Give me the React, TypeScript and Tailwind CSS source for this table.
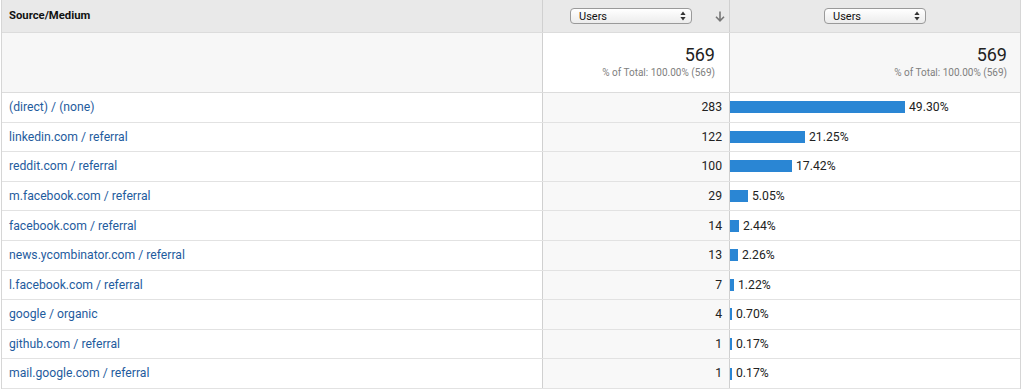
import React from 'react'

const rows = [
  { label: '(direct) / (none)', users: 283, pct: 49.3 },
  { label: 'linkedin.com / referral', users: 122, pct: 21.25 },
  { label: 'reddit.com / referral', users: 100, pct: 17.42 },
  { label: 'm.facebook.com / referral', users: 29, pct: 5.05 },
  { label: 'facebook.com / referral', users: 14, pct: 2.44 },
  { label: 'news.ycombinator.com / referral', users: 13, pct: 2.26 },
  { label: 'l.facebook.com / referral', users: 7, pct: 1.22 },
  { label: 'google / organic', users: 4, pct: 0.7 },
  { label: 'github.com / referral', users: 1, pct: 0.17 },
  { label: 'mail.google.com / referral', users: 1, pct: 0.17 },
]

function MetricSelect({ width }: { width: string }) {
  return (
    <div
      className={`flex h-[16px] ${width} items-center justify-between rounded-[4px] border border-[#9a9a9a] bg-gradient-to-b from-white to-[#ececec] pl-[8px] pr-[5px] text-[11px] leading-none text-[#111]`}
    >
      <span>Users</span>
      <svg width="6" height="10" viewBox="0 0 6 10">
        <path d="M3 0.5 L5.6 4 H0.4 Z" fill="#333" />
        <path d="M3 9.5 L5.6 6 H0.4 Z" fill="#333" />
      </svg>
    </div>
  )
}

export default function App() {
  return (
    <div
      className="h-[391px] w-[1024px] overflow-hidden bg-white pl-[1px] pr-[3px] text-[12.2px] text-[#222]"
      style={{ fontFamily: 'Roboto, "Liberation Sans", sans-serif' }}
    >
      <div className="border-l border-r border-[#d6d6d6]">
        {/* header */}
        <div className="flex h-[33px] border-b border-[#dcdcdc] bg-[#e9e9e9]">
          <div className="flex w-[540px] items-center pl-[7px] text-[11.3px] font-bold text-[#111]">
            Source/Medium
          </div>
          <div className="flex w-[187px] items-center border-l border-[#d0d0d0] pl-[27px]">
            <MetricSelect width="w-[122px]" />
            <svg className="ml-[23px]" width="10" height="11" viewBox="0 0 10 11">
              <path d="M5 0.5 V9.5 M1 5.8 L5 9.8 L9 5.8" stroke="#777" strokeWidth="1.6" fill="none" />
            </svg>
          </div>
          <div className="flex flex-1 items-center justify-center border-l border-[#d0d0d0]">
            <MetricSelect width="w-[102px]" />
          </div>
        </div>
        {/* totals */}
        <div className="flex h-[60px] border-b border-[#dcdcdc]">
          <div className="w-[540px] bg-[#f7f7f7]" />
          <div className="flex w-[187px] flex-col items-end border-l border-[#d0d0d0] bg-white pr-[14px] pt-[11px]">
            <div className="text-[18px] leading-[22px] text-[#222]">569</div>
            <div className="text-[10px] leading-[14px] text-[#808080]">% of Total: 100.00% (569)</div>
          </div>
          <div className="flex flex-1 flex-col items-end border-l border-[#d0d0d0] bg-[#f7f7f7] pr-[13px] pt-[11px]">
            <div className="text-[18px] leading-[22px] text-[#222]">569</div>
            <div className="text-[10px] leading-[14px] text-[#808080]">% of Total: 100.00% (569)</div>
          </div>
        </div>
        {/* rows */}
        {rows.map((r) => (
          <div key={r.label} className="flex h-[29.6px] border-b border-[#e2e2e2]">
            <div className="flex w-[540px] items-center pl-[7px] text-[#1f5c9e]">{r.label}</div>
            <div className="flex w-[187px] items-center justify-end border-l border-[#d0d0d0] bg-[#f8f8f8] pr-[7px] text-[#222]">
              {r.users}
            </div>
            <div className="flex flex-1 items-center border-l border-[#d0d0d0]">
              <div
                className="h-[12px] bg-[#2a86d4]"
                style={{ width: Math.max(2, Math.round(r.pct * 3.55)) }}
              />
              <span className="ml-[4px] text-[#222]">{r.pct.toFixed(2)}%</span>
            </div>
          </div>
        ))}
      </div>
    </div>
  )
}
